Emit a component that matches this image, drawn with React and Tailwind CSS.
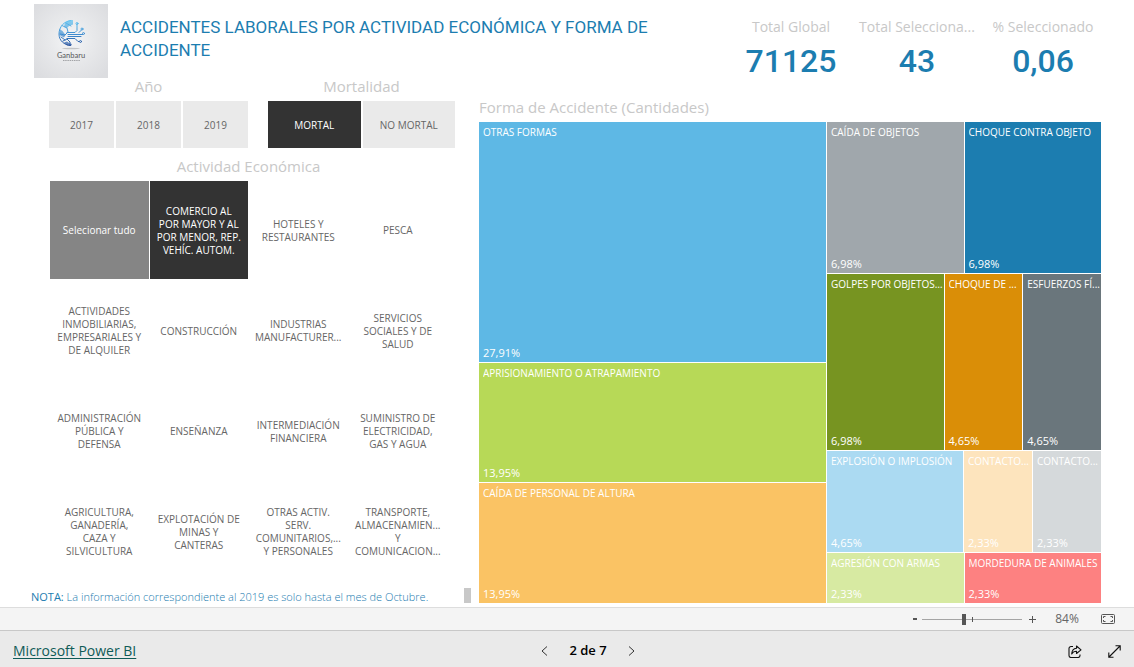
import React from "react";

const kpis = [
  { label: "Total Global", value: "71125" },
  { label: "Total Selecciona...", value: "43" },
  { label: "% Seleccionado", value: "0,06" },
];

const activities = [
  { text: "Selecionar tudo", look: "all" },
  { text: "COMERCIO AL\nPOR MAYOR Y AL\nPOR MENOR, REP.\nVEHÍC. AUTOM.", look: "selected" },
  { text: "HOTELES Y\nRESTAURANTES" },
  { text: "PESCA" },
  { text: "ACTIVIDADES\nINMOBILIARIAS,\nEMPRESARIALES Y\nDE ALQUILER" },
  { text: "CONSTRUCCIÓN" },
  { text: "INDUSTRIAS\nMANUFACTURER..." },
  { text: "SERVICIOS\nSOCIALES Y DE\nSALUD" },
  { text: "ADMINISTRACIÓN\nPÚBLICA Y\nDEFENSA" },
  { text: "ENSEÑANZA" },
  { text: "INTERMEDIACIÓN\nFINANCIERA" },
  { text: "SUMINISTRO DE\nELECTRICIDAD,\nGAS Y AGUA" },
  { text: "AGRICULTURA,\nGANADERÍA,\nCAZA Y\nSILVICULTURA" },
  { text: "EXPLOTACIÓN DE\nMINAS Y\nCANTERAS" },
  { text: "OTRAS ACTIV.\nSERV.\nCOMUNITARIOS,...\nY PERSONALES" },
  { text: "TRANSPORTE,\nALMACENAMIEN...\nY\nCOMUNICACION..." },
];

const looks = {
  all: "bg-[#858585] text-white",
  selected: "bg-[#333333] text-white",
  plain: "bg-white text-[#666666]",
  idle: "bg-[#eaeaea] text-[#666666]",
};

function Logo() {
  return (
    <svg viewBox="0 0 74 74" className="size-[74px] shrink-0" role="img" aria-label="Ganbaru">
      <defs>
        <radialGradient id="plate" cx="50%" cy="48%" r="65%">
          <stop offset="0" stopColor="#f4f5f6" />
          <stop offset="0.45" stopColor="#e8e9eb" />
          <stop offset="1" stopColor="#dcdde0" />
        </radialGradient>
        <linearGradient id="ink" x1="0" y1="16" x2="0" y2="42" gradientUnits="userSpaceOnUse">
          <stop offset="0" stopColor="#5cc3f2" />
          <stop offset="0.55" stopColor="#3f8dd0" />
          <stop offset="1" stopColor="#254f9b" />
        </linearGradient>
      </defs>
      <rect width="74" height="74" fill="url(#plate)" />
      <g stroke="url(#ink)" fill="none" strokeWidth="1" strokeLinecap="round">
        <path d="M37 16.500C30 17 25 23 25 30c0 6.500 5 11 11.500 11.500" />
        <path d="M28 21.500l5 2.500 1 4-3 3-5-1M29 37l4-2 3 3 0 3M32 19l5 3M27 33l4 3" />
        <path d="M33 28.500h8l2-2v-6M34 30.500h14.500M34 32.500h13M33 34.500h8l3 3h1M45 28.500l2.500-2.500" />
        <circle cx="43" cy="19.500" r="1" />
        <circle cx="49.500" cy="29.500" r="1" />
        <circle cx="48" cy="25" r="1" />
        <circle cx="46.500" cy="37.500" r="1" />
      </g>
      <path
        d="M31 18.500l4-2 4-.500v4.500l-4 1.500-2 2-3-1zM25.500 25l3 2 3 4-1.500 2.500-4.500-2.500zM30 38.500l3-1 3 2 2 .500-1 2-4-.500z"
        fill="url(#ink)"
        opacity="0.7"
      />
      <ellipse cx="37" cy="44.500" rx="9" ry="0.700" fill="#c3c5c7" />
      <text x="37" y="53.500" textAnchor="middle" fontFamily="Lato, sans-serif" fontSize="7.500" fill="#55575a">
        Ganbaru
      </text>
      <path d="M29 56.500h17" stroke="#8f9194" strokeWidth="0.800" strokeDasharray="1.500 0.700" />
    </svg>
  );
}

function SlicerTitle({ children }) {
  return <h2 className="text-center text-[15px] leading-4 text-[#c8c8c8]">{children}</h2>;
}

function Tile({ look = "plain", children, className = "" }) {
  return (
    <button
      type="button"
      aria-pressed={look === "selected"}
      className={`flex items-center justify-center whitespace-pre pt-0.5 text-center text-[10px] leading-[13px] ${looks[look]} ${className}`}
    >
      {children}
    </button>
  );
}

function Cell({ name, value, color }) {
  return (
    <div className={`flex min-w-0 flex-col justify-between overflow-hidden pt-[3px] pr-px pb-px pl-1 text-white ${color}`}>
      <span className="truncate text-[10px] leading-[14px]">{name}</span>
      <span className="text-[11px] leading-4">{value}</span>
    </div>
  );
}

function Treemap() {
  return (
    <div className="grid flex-1 grid-cols-[minmax(0,347fr)_minmax(0,274fr)] gap-px">
      <div className="grid grid-rows-[2fr_1fr_1fr] gap-px">
        <Cell name="OTRAS FORMAS" value="27,91%" color="bg-[#5eb8e5]" />
        <Cell name="APRISIONAMIENTO O ATRAPAMIENTO" value="13,95%" color="bg-[#b7d957]" />
        <Cell name="CAÍDA DE PERSONAL DE ALTURA" value="13,95%" color="bg-[#fac364]" />
      </div>
      <div className="grid grid-rows-[151fr_176fr_101fr_50fr] gap-px">
        <div className="grid grid-cols-2 gap-px">
          <Cell name="CAÍDA DE OBJETOS" value="6,98%" color="bg-[#a0a7ac]" />
          <Cell name="CHOQUE CONTRA OBJETO" value="6,98%" color="bg-[#1c7db0]" />
        </div>
        <div className="grid grid-cols-[3fr_2fr_2fr] gap-px">
          <Cell name="GOLPES POR OBJETOS..." value="6,98%" color="bg-[#779421]" />
          <Cell name="CHOQUE DE ..." value="4,65%" color="bg-[#da8e07]" />
          <Cell name="ESFUERZOS FÍ..." value="4,65%" color="bg-[#6a767c]" />
        </div>
        <div className="grid grid-cols-[2fr_1fr_1fr] gap-px">
          <Cell name="EXPLOSIÓN O IMPLOSIÓN" value="4,65%" color="bg-[#abdaf2]" />
          <Cell name="CONTACTO..." value="2,33%" color="bg-[#fde4bd]" />
          <Cell name="CONTACTO..." value="2,33%" color="bg-[#d5d9db]" />
        </div>
        <div className="grid grid-cols-2 gap-px">
          <Cell name="AGRESIÓN CON ARMAS" value="2,33%" color="bg-[#d7eaa2]" />
          <Cell name="MORDEDURA DE ANIMALES" value="2,33%" color="bg-[#fd8181]" />
        </div>
      </div>
    </div>
  );
}

function ZoomBar() {
  return (
    <div className="flex h-[23px] items-center justify-end border-t border-[#dddddd] bg-[#f4f4f4] pr-[19px] text-[#666666]">
      <button type="button" aria-label="Reducir" className="mr-px flex h-4 w-3 items-center justify-center">
        <svg viewBox="0 0 4 2" className="h-[2px] w-[4px]"><path d="M0 1h4" stroke="#555" strokeWidth="2" /></svg>
      </button>
      <div className="relative flex items-center">
        <input
          type="range"
          aria-label="Zoom"
          min="0"
          max="100"
          defaultValue="42"
          className="h-[11px] w-[100px] appearance-none bg-linear-to-b from-transparent from-45% via-[#555555] via-45% to-transparent to-55% [&::-webkit-slider-thumb]:h-[11px] [&::-webkit-slider-thumb]:w-1 [&::-webkit-slider-thumb]:appearance-none [&::-webkit-slider-thumb]:bg-[#555555]"
        />
        <span className="pointer-events-none absolute left-1/2 h-[5px] w-px bg-[#555555]" />
      </div>
      <button type="button" aria-label="Ampliar" className="ml-1 flex h-4 w-3 items-center justify-center">
        <svg viewBox="0 0 7 7" className="size-[7px]"><path d="M0 3.500h7M3.500 0v7" stroke="#555" /></svg>
      </button>
      <span className="ml-[13px] w-8 text-center text-xs">84%</span>
      <button type="button" aria-label="Ajustar a la página" className="ml-[18px]">
        <svg viewBox="0 0 14 10" className="h-[10px] w-[14px]" fill="none" stroke="#555">
          <rect x="0.500" y="0.500" width="13" height="9" rx="1" />
          <path d="M4.500 2.500h-2v1.500M2.500 6v1.500h2M9.500 2.500h2v1.500M11.500 6v1.500h-2" />
        </svg>
      </button>
    </div>
  );
}

function Footer() {
  return (
    <footer className="grid h-[37px] grid-cols-3 items-center border-t border-[#c8c8c8] bg-[#eaeaea] px-[13px] pt-1">
      <a href="#powerbi" className="justify-self-start text-sm text-[#0f5b57] underline underline-offset-2">
        Microsoft Power BI
      </a>
      <nav className="flex items-center justify-center gap-[21px] pl-[42px] text-[13px] font-semibold text-black">
        <button type="button" aria-label="Página anterior">
          <svg viewBox="0 0 7 10" className="h-[10px] w-[7px]" fill="none" stroke="#333"><path d="M6 .500L1 5l5 4.500" /></svg>
        </button>
        <span>2 de 7</span>
        <button type="button" aria-label="Página siguiente">
          <svg viewBox="0 0 7 10" className="h-[10px] w-[7px]" fill="none" stroke="#333"><path d="M1 .500L6 5 1 9.500" /></svg>
        </button>
      </nav>
      <div className="flex items-center gap-[26px] justify-self-end">
        <button type="button" aria-label="Compartir">
          <svg viewBox="0 0 14 13" className="h-[13px] w-[14px]" fill="none" stroke="#111" strokeWidth="1.100" strokeLinejoin="round">
            <path d="M5 1.500H3A2 2 0 0 0 1 3.500v7a2 2 0 0 0 2 2h7a2 2 0 0 0 2-2V9.500" />
            <path d="M8.500 1l4.500 3.800L8.500 8.500V6.300C6 6.300 4.700 7.200 3.700 9 3.900 5.500 5.500 3.500 8.500 3.200z" />
          </svg>
        </button>
        <button type="button" aria-label="Pantalla completa">
          <svg viewBox="0 0 13 13" className="size-[13px]" fill="none" stroke="#111" strokeWidth="1.100">
            <path d="M1 12L12 1M7.500 .800h4.700v4.700M.800 7.500v4.700h4.700" />
          </svg>
        </button>
      </div>
    </footer>
  );
}

export default function App() {
  return (
    <div className="flex min-h-screen flex-col bg-white font-['Open_Sans','Noto_Sans',sans-serif]">
      <header className="flex items-start justify-between pt-1 pr-7 pl-[34px]">
        <div className="flex gap-3">
          <Logo />
          <h1 className="max-w-[560px] pt-3 font-['Roboto',sans-serif] text-[17px] leading-[23px] text-[#1c7db0]">
            ACCIDENTES LABORALES POR ACTIVIDAD ECONÓMICA Y FORMA DE ACCIDENTE
          </h1>
        </div>
        <dl className="grid grid-cols-3 pt-[11px] text-center">
          {kpis.map((k) => (
            <div key={k.label} className="flex w-[126px] flex-col gap-1.5">
              <dt className="text-sm leading-6 whitespace-nowrap text-[#c8c8c8]">{k.label}</dt>
              <dd className="font-['Roboto',sans-serif] text-[32px] leading-8 font-medium text-[#1c7db0]">{k.value}</dd>
            </div>
          ))}
        </dl>
      </header>

      <main className="grid flex-1 grid-cols-[minmax(0,448fr)_minmax(0,622fr)] pr-[33px] pb-1 pl-[31px]">
        <section className="flex flex-col pr-2">
          <div className="grid grid-cols-[minmax(0,199fr)_minmax(0,187fr)] gap-5 pr-4 pl-[18px]">
            <div className="flex flex-col gap-[7px]">
              <SlicerTitle>Año</SlicerTitle>
              <div className="grid h-[47px] grid-cols-3 gap-0.5">
                <Tile look="idle">2017</Tile>
                <Tile look="idle">2018</Tile>
                <Tile look="idle">2019</Tile>
              </div>
            </div>
            <div className="flex flex-col gap-[7px]">
              <SlicerTitle>Mortalidad</SlicerTitle>
              <div className="grid h-[47px] grid-cols-2 gap-0.5">
                <Tile look="selected" className="font-medium">MORTAL</Tile>
                <Tile look="idle">NO MORTAL</Tile>
              </div>
            </div>
          </div>
          <div className="flex flex-1 flex-col gap-[7px] pt-2.5 pr-6 pl-[19px]">
            <SlicerTitle>Actividad Económica</SlicerTitle>
            <div className="grid flex-1 auto-rows-fr grid-cols-4 gap-x-px gap-y-[3px]">
              {activities.map((a) => (
                <Tile key={a.text} look={a.look}>{a.text}</Tile>
              ))}
            </div>
          </div>
          <div className="flex items-end justify-between pt-2">
            <p className="text-[11px] leading-3 font-light text-[#1c7db0]">
              <span className="font-normal">NOTA:</span> La información correspondiente al 2019 es solo hasta el mes de
              Octubre.
            </p>
            <span className="h-[15px] w-[7px] bg-[#c8c8c8]" />
          </div>
        </section>
        <section className="flex flex-col gap-[5px] pt-[19px]">
          <h2 className="text-[15px] leading-5 text-[#c8c8c8]">Forma de Accidente (Cantidades)</h2>
          <Treemap />
        </section>
      </main>

      <ZoomBar />
      <Footer />
    </div>
  );
}
